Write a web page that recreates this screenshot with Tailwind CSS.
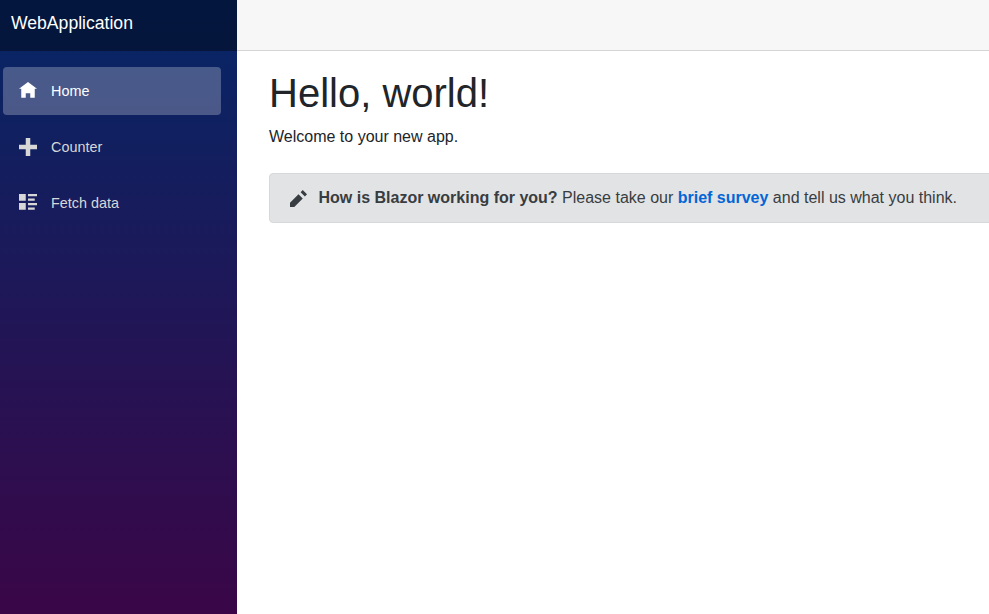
<!DOCTYPE html>
<html>
<head>
<meta charset="utf-8">
<script src="https://cdn.jsdelivr.net/npm/@tailwindcss/browser@4"></script>
</head>
<body class="h-[614px] w-[989px] overflow-hidden bg-white font-['Liberation_Sans',Arial,sans-serif] text-[#212529]">
<div class="flex h-[614px]">
  <aside class="w-[237px] shrink-0 flex flex-col bg-[linear-gradient(180deg,#052767_0%,#3a0647_100%)]">
    <div class="h-[51px] shrink-0 bg-black/40 pl-[11px] pt-[11px] text-[17.6px] leading-[24px] text-white">WebApplication</div>
    <nav class="flex flex-col gap-2 pl-[3px] pt-4 w-[221px]">
      <a class="flex h-[48px] items-center rounded-[4px] bg-white/25 text-white text-[14.4px]">
        <svg class="ml-[16px] mr-[14px] w-[18px] h-[18px] fill-current" viewBox="0 0 8 8"><path d="M4 0L0 3h1v4h2V5h2v2h2V3.03L8 3z"/></svg>
        <span class="pt-0.5">Home</span>
      </a>
      <a class="flex h-[48px] items-center rounded-[4px] text-[#d7d7d7] text-[14.4px]">
        <svg class="ml-[16px] mr-[14px] w-[18px] h-[18px] fill-current" viewBox="0 0 8 8"><path d="M3 0v3H0v2h3v3h2V5h3V3H5V0z"/></svg>
        <span class="pt-0.5">Counter</span>
      </a>
      <a class="flex h-[48px] items-center rounded-[4px] text-[#d7d7d7] text-[14.4px]">
        <svg class="ml-[16px] mr-[14px] w-[18px] h-[18px] fill-current" viewBox="0 0 8 8"><path d="M0 0v3h3V0zm4 0v1h4V0zm0 2v1h3V2zM0 4v3h3V4zm4 0v1h4V4zm0 2v1h3V6z"/></svg>
        <span class="pt-0.5">Fetch data</span>
      </a>
    </nav>
  </aside>
  <main class="flex-1 min-w-0 overflow-hidden">
    <div class="h-[51px] bg-[#f7f7f7] border-b border-[#d6d5d5]"></div>
    <div class="pl-8 pt-[18px]">
      <h1 class="text-[40px] leading-[48px] font-normal">Hello, world!</h1>
      <p class="mt-[8px] text-[16px] leading-[24px]">Welcome to your new app.</p>
      <div class="mt-[24px] flex h-[50px] w-[800px] items-center rounded-l-[4px] border border-[#d6d8db] bg-[#e2e3e5] pl-[19px] text-[16px] text-[#383d41]">
        <svg class="ml-px mr-[11.5px] w-[17px] h-[17px] fill-current shrink-0" viewBox="0 0 8 8"><path d="M6 0L5 1l2 2 1-1zM4 2L0 6v2h2l4-4z"/></svg>
        <span><b class="font-bold">How is Blazor working for you?</b> Please take our <a class="font-bold text-[#0366d6]">brief survey</a> and tell us what you think.</span>
      </div>
    </div>
  </main>
</div>
</body>
</html>
